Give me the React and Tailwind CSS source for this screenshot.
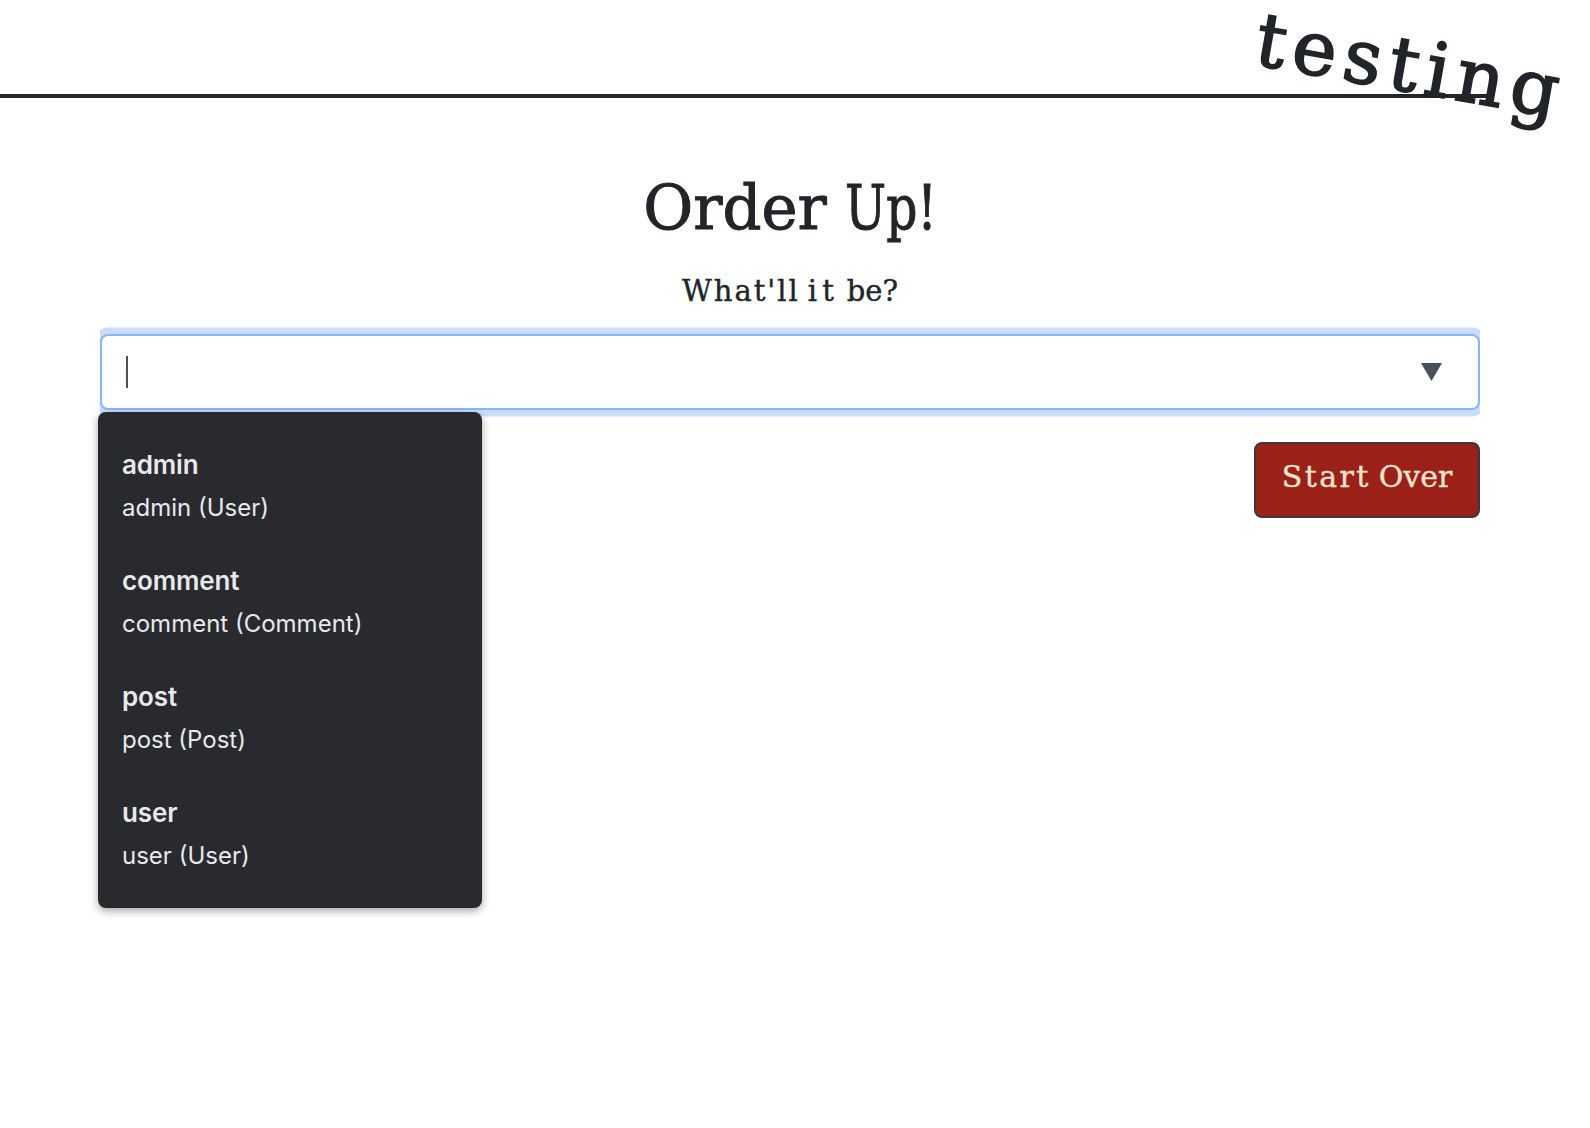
const suggestions = [
  { value: "admin", label: "admin (User)" },
  { value: "comment", label: "comment (Comment)" },
  { value: "post", label: "post (Post)" },
  { value: "user", label: "user (User)" },
];

function SuggestionMenu() {
  return (
    <ul className="absolute -left-[2px] top-[78px] h-[496px] w-[384px] rounded-lg bg-[#292a2e] pl-6 pt-[34px] font-['Inter',sans-serif] text-[#e8e8ed] shadow-[0_3px_8px_rgba(0,0,0,0.35)]">
      {suggestions.map((s) => (
        <li key={s.value} className="h-[116px] whitespace-nowrap">
          <div className="h-[43px] text-[26px] font-semibold leading-[38px] tracking-[-0.15px]">{s.value}</div>
          <div className="text-[24px] leading-[38px]">{s.label}</div>
        </li>
      ))}
    </ul>
  );
}

export default function App() {
  return (
    <div className="h-[1128px] w-[1590px] bg-white font-['DejaVu_Serif',serif] text-[#212529]">
      <header className="relative h-[98px]">
        <div className="h-full w-[1492px] border-b-4 border-[#212529]" />
        <div className="absolute left-[1252px] top-0 origin-[0_66px] rotate-[10deg] whitespace-nowrap text-[75px] leading-[76px] tracking-[7.2px] [-webkit-text-stroke:1.8px_#212529]">
          testing
        </div>
      </header>

      <main className="ml-[100px] mr-[110px]">
        <h1 className="flex h-[161px] items-end justify-center gap-[18px] text-[61px] leading-[80px] [-webkit-text-stroke:1px_#212529]">
          <span className="pb-[11px]">Order</span>
          <span className="-mr-[23px] origin-left scale-x-[0.8] pb-[11px]">Up!</span>
        </h1>
        <p className="mt-[10px] flex h-[44px] justify-center gap-[8px] text-[29px] leading-[44px] [-webkit-text-stroke:0.4px_#212529]">
          <span className="tracking-[2px]">What'll</span>
          <span className="tracking-[5px]">it</span>
          <span>be?</span>
        </p>

        <div className="relative mt-[21px]">
          <div className="flex h-[76px] items-center justify-between rounded-lg border-2 border-[#86b7fe] bg-white pl-6 pr-9 shadow-[0_0_0_6.5px_#cbddfe] [clip-path:inset(-8px_0)]">
            <div className="h-8 w-[2px] bg-[#495057]" />
            <svg width="21" height="18" viewBox="0 0 21 18" className="text-[#495057]">
              <path d="M0 0h21L10.5 18z" fill="currentColor" />
            </svg>
          </div>
          <SuggestionMenu />
        </div>

        <div className="mt-8 flex justify-end">
          <button className="flex h-[76px] w-[226px] justify-center gap-[8px] rounded-lg border-2 border-[#343a40] bg-[#9a2018] pt-[11px] text-[30px] leading-[44px] text-[#ede4cc] [-webkit-text-stroke:0.4px_#ede4cc]">
            <span className="tracking-[2.4px]">Start</span>
            <span>Over</span>
          </button>
        </div>
      </main>
    </div>
  );
}
